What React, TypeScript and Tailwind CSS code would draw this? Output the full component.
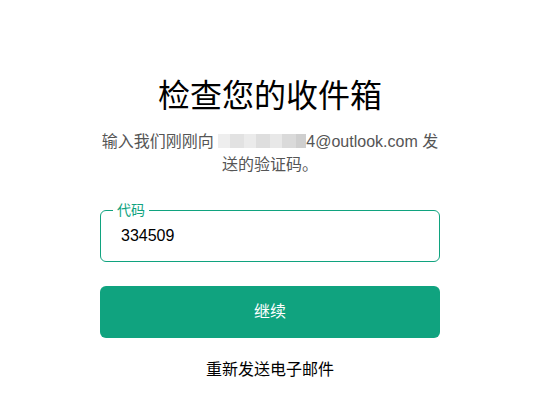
function App() {
  return (
    <div className="w-[548px] h-[408px] bg-white font-['Liberation_Sans','Noto_Sans_CJK_SC',sans-serif]">
      <div className="w-[340px] ml-[100px] pt-[76px] flex flex-col items-center">
        <h1 className="text-[32px] leading-[40px] text-black font-normal">检查您的收件箱</h1>
        <p className="mt-[14px] w-[340px] text-[16px] leading-[23px] text-[#555] text-center">
          输入我们刚刚向{' '}
          <span className="inline-flex align-middle h-[14px] -mt-[3px]">
            <span className="w-[12px] bg-[#eeeeee]" />
            <span className="w-[14px] bg-[#e2e2e2]" />
            <span className="w-[12px] bg-[#ebebeb]" />
            <span className="w-[14px] bg-[#dedede]" />
            <span className="w-[12px] bg-[#e8e8e8]" />
            <span className="w-[14px] bg-[#dadada]" />
            <span className="w-[10px] bg-[#cfcfcf]" />
          </span>
          4@outlook.com 发送的验证码。
        </p>
        <div className="relative mt-[34px] w-full h-[52px] border border-[#10a37f] rounded-[6px] flex items-center px-[20px]">
          <span className="absolute left-[12px] -top-[10px] bg-white px-[4px] text-[14px] leading-[18px] text-[#10a37f]">代码</span>
          <span className="text-[16px] text-black">334509</span>
        </div>
        <button className="mt-[24px] w-full h-[52px] rounded-[6px] bg-[#10a37f] text-white text-[16px]">继续</button>
        <p className="mt-[21px] text-[16px] leading-[22px] text-black">重新发送电子邮件</p>
      </div>
    </div>
  );
}

export default App;
